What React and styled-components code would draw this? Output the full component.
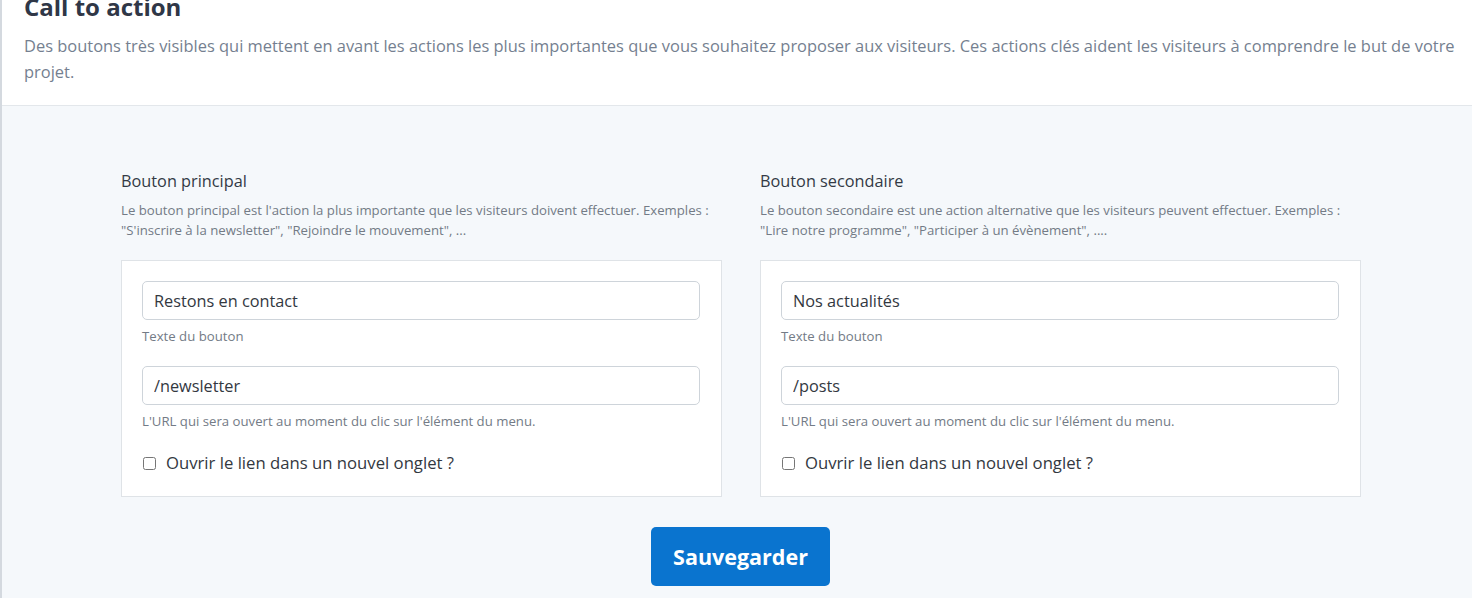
import React, { useState } from "react";
import styled, { createGlobalStyle } from "styled-components";

const GlobalStyle = createGlobalStyle`
	body {
		margin: 0;
		background: #f5f8fb;
		font-family: "Open Sans", "Noto Sans", sans-serif;
	}
	* {
		box-sizing: border-box;
	}
`;

const Page = styled.div`
	min-height: 598px;
	border-left: 2px solid #d4d9df;
	background: #f5f8fb;
	overflow: hidden;
`;

const Header = styled.header`
	background: #fff;
	border-bottom: 1px solid #e3e7eb;
	padding: 0 4px 20px 22px;
	margin-top: -9px;
`;

const Title = styled.h1`
	margin: 0;
	font-size: 24px;
	line-height: 32px;
	font-weight: 700;
	color: #2f3747;
`;

const Lead = styled.p`
	margin: 10px 0 0;
	font-size: 16.45px;
	line-height: 26px;
	color: #757f90;
`;

const Main = styled.main`
	padding: 64px 0 14px 119px;
`;

const Columns = styled.div`
	display: grid;
	grid-template-columns: 601px 601px;
	column-gap: 38px;
`;

const Column = styled.section`
	display: flex;
	flex-direction: column;
`;

const ColTitle = styled.h2`
	margin: 0;
	font-size: 16.3px;
	line-height: 22px;
	font-weight: 400;
	color: #333a45;
`;

const ColDesc = styled.p`
	margin: 8px 0 0;
	font-size: 13.2px;
	line-height: 20px;
	color: #737b86;
`;

const Card = styled.div`
	margin-top: 20px;
	background: #fff;
	border: 1px solid #dfe3e7;
	padding: 20px 21px 21px 20px;
`;

const Field = styled.div`
	margin-bottom: 21px;
`;

const Input = styled.input`
	display: block;
	width: 100%;
	height: 39px;
	padding: 0 11px;
	border: 1px solid #ced4da;
	border-radius: 5px;
	font-family: inherit;
	font-size: 16.3px;
	color: #33383f;
	background: #fff;
	outline: none;
`;

const Help = styled.div`
	margin-top: 7px;
	font-size: 13.2px;
	line-height: 18px;
	color: #737b86;
`;

const CheckRow = styled.label`
	display: flex;
	align-items: center;
	gap: 10px;
	margin-top: 8px;
	font-size: 16.7px;
	line-height: 24px;
	color: #33383f;
	cursor: pointer;

	input {
		margin: 0 0 0 1px;
		width: 13px;
		height: 13px;
	}
`;

const Actions = styled.div`
	display: flex;
	justify-content: center;
	margin-top: 30px;
	padding-right: 112px;
`;

const SaveButton = styled.button`
	width: 179px;
	height: 59px;
	border: none;
	border-radius: 5px;
	background: #0a74cf;
	color: #fff;
	font-family: inherit;
	font-size: 21.5px;
	font-weight: 700;
	cursor: pointer;
`;

const columns = [
	{
		title: "Bouton principal",
		desc: "Le bouton principal est l'action la plus importante que les visiteurs doivent effectuer. Exemples : \"S'inscrire à la newsletter\", \"Rejoindre le mouvement\", ...",
		label: "Restons en contact",
		url: "/newsletter"
	},
	{
		title: "Bouton secondaire",
		desc: "Le bouton secondaire est une action alternative que les visiteurs peuvent effectuer. Exemples : \"Lire notre programme\", \"Participer à un évènement\", ....",
		label: "Nos actualités",
		url: "/posts"
	}
];

const ButtonSettings = ({ data }) => {
	const [label, setLabel] = useState(data.label);
	const [url, setUrl] = useState(data.url);
	const [blank, setBlank] = useState(false);
	return (
		<Column>
			<ColTitle>{data.title}</ColTitle>
			<ColDesc>{data.desc}</ColDesc>
			<Card>
				<Field>
					<Input value={label} onChange={e => setLabel(e.target.value)} />
					<Help>Texte du bouton</Help>
				</Field>
				<Field>
					<Input value={url} onChange={e => setUrl(e.target.value)} />
					<Help>L'URL qui sera ouvert au moment du clic sur l'élément du menu.</Help>
				</Field>
				<CheckRow>
					<input
						type="checkbox"
						checked={blank}
						onChange={e => setBlank(e.target.checked)}
					/>
					Ouvrir le lien dans un nouvel onglet ?
				</CheckRow>
			</Card>
		</Column>
	);
};

const App = () => {
	return (
		<Page>
			<GlobalStyle />
			<Header>
				<Title>Call to action</Title>
				<Lead>
					Des boutons très visibles qui mettent en avant les actions les plus
					importantes que vous souhaitez proposer aux visiteurs. Ces actions clés
					aident les visiteurs à comprendre le but de votre projet.
				</Lead>
			</Header>
			<Main>
				<Columns>
					{columns.map(c => (
						<ButtonSettings key={c.title} data={c} />
					))}
				</Columns>
				<Actions>
					<SaveButton>Sauvegarder</SaveButton>
				</Actions>
			</Main>
		</Page>
	);
};

export default App;
